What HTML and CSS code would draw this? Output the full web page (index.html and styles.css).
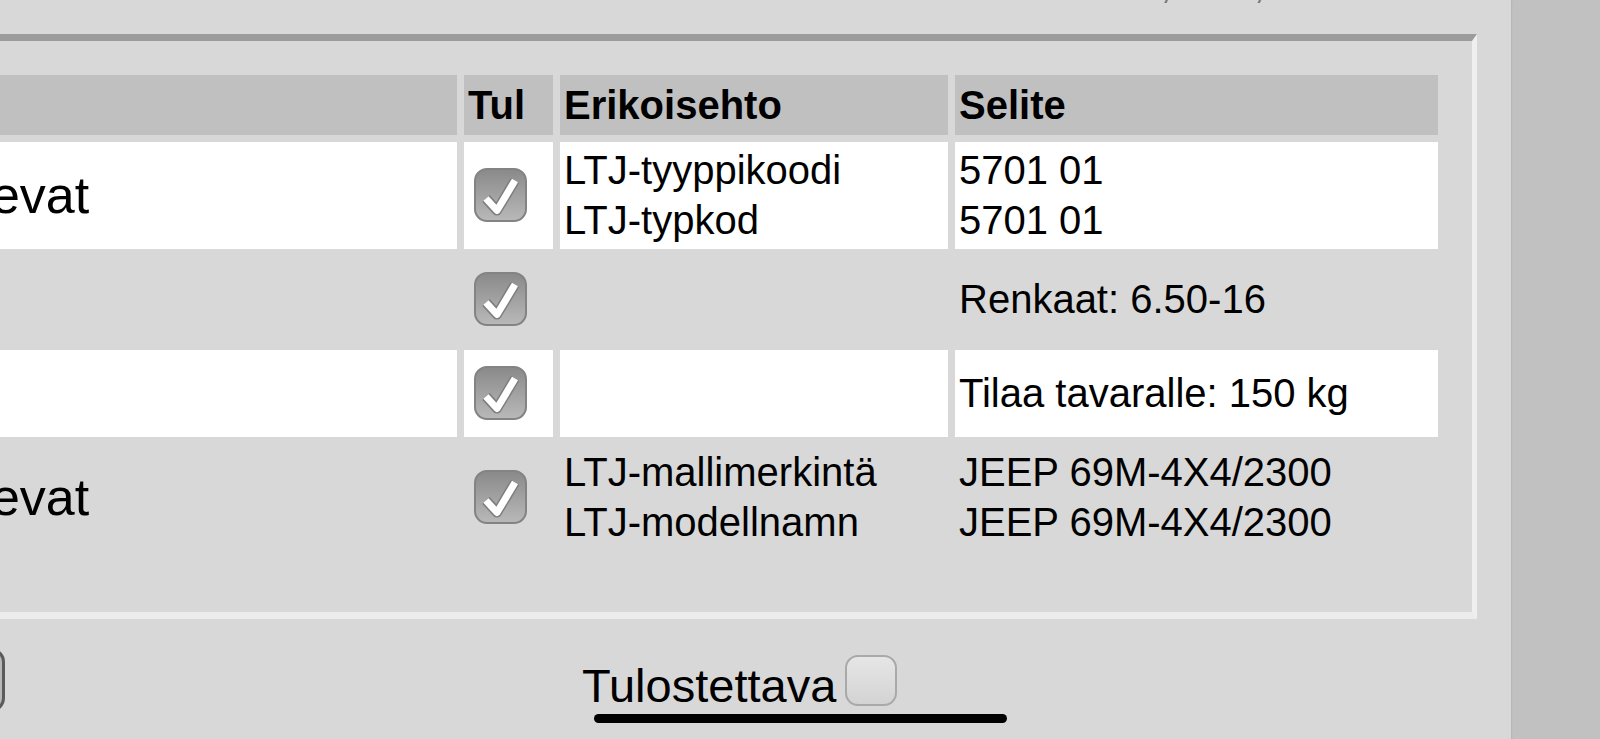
FILE: index.html
```html
<!DOCTYPE html>
<html lang="fi">
<head>
<meta charset="utf-8">
<title>Erikoisehdot</title>
<link rel="stylesheet" href="styles.css">
</head>
<body>
<div class="screen">
  <div class="main">
    <div class="top"><span class="top-text">MALLI 69M, 4X4, 2300</span></div>
    <div class="panel">
      <table class="spec">
        <colgroup>
          <col class="c-name"><col class="c-tul"><col class="c-erik"><col class="c-sel">
        </colgroup>
        <thead>
          <tr><th></th><th>Tul</th><th>Erikoisehto</th><th>Selite</th></tr>
        </thead>
        <tbody>
          <tr class="light">
            <td class="name">tulevat</td>
            <td><span class="cb on"><svg viewBox="0 0 49 49"><path class="ck-o" d="M10 28 L21 40 L39 10"/><path class="ck" d="M10 28 L21 40 L39 10"/></svg></span></td>
            <td>LTJ-tyyppikoodi<br>LTJ-typkod</td>
            <td>5701 01<br>5701 01</td>
          </tr>
          <tr>
            <td class="name"></td>
            <td><span class="cb on"><svg viewBox="0 0 49 49"><path class="ck-o" d="M10 28 L21 40 L39 10"/><path class="ck" d="M10 28 L21 40 L39 10"/></svg></span></td>
            <td></td>
            <td>Renkaat: 6.50-16</td>
          </tr>
          <tr class="light">
            <td class="name"></td>
            <td><span class="cb on"><svg viewBox="0 0 49 49"><path class="ck-o" d="M10 28 L21 40 L39 10"/><path class="ck" d="M10 28 L21 40 L39 10"/></svg></span></td>
            <td></td>
            <td>Tilaa tavaralle: 150 kg</td>
          </tr>
          <tr>
            <td class="name">tulevat</td>
            <td><span class="cb on"><svg viewBox="0 0 49 49"><path class="ck-o" d="M10 28 L21 40 L39 10"/><path class="ck" d="M10 28 L21 40 L39 10"/></svg></span></td>
            <td>LTJ-mallimerkintä<br>LTJ-modellnamn</td>
            <td>JEEP 69M-4X4/2300<br>JEEP 69M-4X4/2300</td>
          </tr>
        </tbody>
      </table>
    </div>
    <div class="bottom">
      <button class="btn-edge" type="button"></button>
      <label class="print">Tulostettava<span class="cb off"></span></label>
    </div>
  </div>
  <div class="side"></div>
</div>
<div class="home"></div>
</body>
</html>
```

FILE: styles.css
```css
html, body {
  margin: 0;
  height: 100%;
}
body {
  background: #d8d8d8;
  font-family: "Liberation Sans", Arial, sans-serif;
  color: #000;
  overflow: hidden;
}
.screen {
  display: flex;
  height: 739px;
}
.main {
  flex: 0 0 1511px;
  min-width: 0;
  overflow: hidden;
}
.side {
  flex: 1;
  background: #c1c1c1;
  box-shadow: inset 2px 0 2px -1px rgba(0, 0, 0, 0.06);
}
.top {
  height: 34px;
  overflow: hidden;
  text-align: right;
  padding-right: 146px;
  font-size: 40px;
  line-height: 50px;
  color: #777;
}
.top-text {
  display: block;
  margin-top: -41px;
}
.panel {
  margin: 0 34px 0 -102px;
  border-style: solid;
  border-width: 7px 5px 7px 0;
  border-color: #9b9b9b #efefef #ececec transparent;
  padding: 27px 26px 54px 27px;
}
.spec {
  border-collapse: separate;
  border-spacing: 7px;
  table-layout: fixed;
  width: 1520px;
}
.c-name { width: 525px; }
.c-tul { width: 89px; }
.c-erik { width: 388px; }
.c-sel { width: 483px; }
.spec th {
  background: #c0c0c0;
  font-size: 40px;
  line-height: 50px;
  font-weight: bold;
  text-align: left;
  padding: 5px 4px;
}
.spec td {
  font-size: 40px;
  line-height: 50px;
  padding: 3px 4px 4px;
  vertical-align: middle;
  white-space: nowrap;
}
.spec tr.light td {
  background: #fff;
}
.spec td.name {
  font-size: 52px;
  overflow: hidden;
}
.cb {
  box-sizing: border-box;
  border-radius: 13px;
}
.cb.on {
  display: block;
  width: 53px;
  height: 54px;
  margin: 13px 0 13px 6px;
  border: 2px solid #838383;
  background: linear-gradient(#8a8a8a, #b8b8b8);
}
.cb.on svg {
  display: block;
  width: 100%;
  height: 100%;
}
.ck-o {
  fill: none;
  stroke: #7e7e7e;
  stroke-width: 10;
  stroke-linejoin: round;
}
.ck {
  fill: none;
  stroke: #fff;
  stroke-width: 7;
  stroke-linejoin: round;
}
.bottom {
  display: flex;
  align-items: flex-start;
}
.btn-edge {
  margin: 29px 0 0 -55px;
  width: 60px;
  height: 64px;
  padding: 0;
  border: 3px solid #5b5b5b;
  border-radius: 14px;
  background: #b8b8b8;
}
.print {
  margin: 36px 0 0 577px;
  font-size: 47px;
}
.cb.off {
  display: inline-block;
  width: 52px;
  height: 51px;
  margin-left: 9px;
  vertical-align: -4px;
  border: 2px solid #a9a9a9;
  background: linear-gradient(#e6e6e6, #d3d3d3);
}
.home {
  position: fixed;
  left: 594px;
  bottom: 16px;
  width: 413px;
  height: 9px;
  border-radius: 5px;
  background: #000;
}
```
